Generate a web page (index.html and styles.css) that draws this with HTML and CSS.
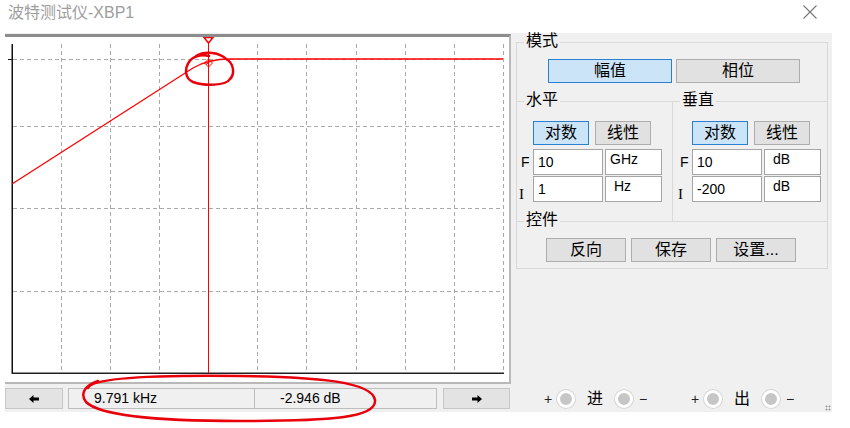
FILE: index.html
```html
<!DOCTYPE html>
<html lang="zh-CN">
<head>
  <meta charset="UTF-8" />
  <meta name="viewport" content="width=device-width, initial-scale=1.0"/>
  <title>波特测试仪-XBP1</title>
  <link rel="stylesheet" href="styles.css">
</head>
<body>
  <div class="titlebar">
    <span class="title">波特测试仪-XBP1</span>
    <svg class="close" width="16" height="14" viewBox="0 0 16 14">
      <path d="M1.5 0.5 L14.5 13.5 M14.5 0.5 L1.5 13.5" stroke="#777" stroke-width="1.1" fill="none"/>
    </svg>
  </div>

  <div class="window">
    <div class="scope">
      <div class="plot">
        <svg width="504" height="345" viewBox="0 0 504 345">
          <!-- grid -->
          <g stroke="#aaa" stroke-width="1" stroke-dasharray="4 3" fill="none">
            <path d="M56.5 7 V336 M105.5 7 V336 M154.5 7 V336 M252.5 7 V336 M301.5 7 V336 M351.5 7 V336 M400.5 7 V336 M449.5 7 V336 M498.5 7 V336"/>
            <path d="M8 89.5 H498 M8 171.5 H498 M8 254.5 H498 M8 22.5 H498"/>
          </g>
          <!-- axes -->
          <path d="M7.25 7 V337" stroke="#111" stroke-width="1.5"/>
          <path d="M7 336.25 H499" stroke="#222" stroke-width="1.5"/>
          <path d="M3 22.5 H7" stroke="#111" stroke-width="1"/>
          <!-- curve -->
          <path d="M7 147 L188 31 Q203 22 225 22 L498 22" stroke="#f00" stroke-width="1.3" fill="none"/>
          <!-- cursor -->
          <path d="M203.5 0 V336" stroke="#f00" stroke-width="1"/>
          <path d="M199 0.5 H208 L203.5 6 Z" stroke="#f00" stroke-width="1.5" fill="#fff"/>
          <path d="M199.5 26 L203.5 22 L207.5 26 L203.5 30 Z M201 27.5 L206 24" stroke="#f00" stroke-width="1" fill="none"/>
        </svg>
      </div>
      <div class="readout">
        <button class="step">
          <svg width="10" height="8" viewBox="0 0 10 8"><path d="M0 4 L4.5 0 V2.6 H10 V5.4 H4.5 V8 Z" fill="#000"/></svg>
        </button>
        <div class="value freq">9.791 kHz</div>
        <div class="value gain">-2.946 dB</div>
        <button class="step next">
          <svg width="10" height="8" viewBox="0 0 10 8"><path d="M10 4 L5.5 0 V2.6 H0 V5.4 H5.5 V8 Z" fill="#000"/></svg>
        </button>
      </div>
    </div>

    <div class="controls">
      <fieldset class="panel">
        <legend>模式</legend>
        <div class="mode-row">
          <button class="btn wide on">幅值</button>
          <button class="btn wide">相位</button>
        </div>

        <div class="axes">
          <fieldset class="axis">
            <legend>水平</legend>
            <div class="pair">
              <button class="btn on">对数</button>
              <button class="btn">线性</button>
            </div>
            <div class="entry"><span class="lbl">F</span><span class="box">10</span><span class="box unit">GHz</span></div>
            <div class="entry"><span class="lbl i">I</span><span class="box">1</span><span class="box unit">&nbsp;Hz</span></div>
          </fieldset>
          <fieldset class="axis vert">
            <legend>垂直</legend>
            <div class="pair">
              <button class="btn on">对数</button>
              <button class="btn">线性</button>
            </div>
            <div class="entry"><span class="lbl">F</span><span class="box">10</span><span class="box unit">&nbsp;dB</span></div>
            <div class="entry"><span class="lbl i">I</span><span class="box">-200</span><span class="box unit">&nbsp;dB</span></div>
          </fieldset>
        </div>

        <fieldset class="ctrl">
          <legend>控件</legend>
          <div class="ctrl-row">
            <button class="btn mid">反向</button>
            <button class="btn mid">保存</button>
            <button class="btn mid">设置...</button>
          </div>
        </fieldset>
      </fieldset>

      <div class="terminals">
        <div class="term">
          <span class="sign">+</span><span class="dot"></span><span class="name">进</span><span class="dot"></span><span class="sign minus">−</span>
        </div>
        <div class="term out">
          <span class="sign">+</span><span class="dot"></span><span class="name">出</span><span class="dot"></span><span class="sign minus">−</span>
        </div>
      </div>
    </div>
    <span class="grip"></span>
  </div>

  <!-- hand-drawn marks on the screenshot -->
  <svg class="ink" width="850" height="428" viewBox="0 0 850 428">
    <g stroke="#e8000b" stroke-width="2.5" fill="none" stroke-linecap="round">
      <path d="M196 56 C206 50 220 53 226 59 C234 63 235 74 230 79 C226 86 204 86 193 82 C184 78 185 68 189 62 C192 57 200 54 209 56"/>
      <path d="M88 388 C92 378 150 375 240 376 C320 377 372 382 375 400 C377 418 330 421 240 421 C160 421 100 416 86 402 C80 394 84 386 98 381"/>
    </g>
  </svg>
</body>
</html>
```

FILE: styles.css
```css
body {
  margin: 0; background: #fff; color: #000;
  font-family: "Liberation Sans", "Noto Sans CJK SC", sans-serif;
  position: relative; width: 850px; height: 428px; overflow: hidden;
}

.titlebar {
  height: 33px; box-sizing: border-box; padding: 3px 32px 0 8px;
  display: flex; justify-content: space-between; align-items: flex-start;
}
.title { font-size: 16px; line-height: 20px; color: #9d9d9d; }
.close { margin-top: 2px; }

.window {
  position: relative; display: flex;
  margin-left: 5px; width: 827px; height: 379px; background: #f0f0f0;
}

/* plot + readout */
.scope { width: 506px; display: flex; flex-direction: column; }
.plot {
  margin-top: 1px; height: 350px; box-sizing: border-box; background: #fff;
  border-top: 3px solid #8c8c8c; border-right: 2px solid #b8b8b8; border-bottom: 2px solid #b8b8b8;
}
.plot svg { display: block; }

.readout { margin-top: 4px; height: 21px; display: flex; }
.step {
  width: 58px; height: 21px; padding: 0; border: 1px solid #c6c6c6; background: #e3e3e3;
  display: flex; align-items: center; justify-content: center;
}
.step.next { width: 67px; margin-left: 6px; }
.value {
  height: 21px; box-sizing: border-box; border: 1px solid #bdbdbd;
  padding-left: 25px; font-size: 14px; line-height: 19px;
}
.value.freq { width: 187px; margin-left: 5px; }
.value.gain { width: 182px; border-left: none; }

/* right side */
.controls { flex: 1; display: flex; flex-direction: column; padding-left: 5px; }

fieldset { margin: 0; padding: 0; border: none; min-width: 0; }
legend { font-size: 16px; line-height: 20px; padding: 0 2px 3px; margin-left: 7px; }

.panel {
  width: 312px; box-sizing: border-box; margin-top: -2px; padding-bottom: 6px;
  border: 1px solid #d9d9d9;
}

.btn {
  height: 24px; box-sizing: border-box; padding: 0;
  border: 1px solid #adadad; background: #e1e1e1; color: #000;
  font-family: "Liberation Sans", "Noto Sans CJK SC", sans-serif; font-size: 16px; line-height: 22px;
}
.btn.on { background: #cce4f7; border-color: #2a7fd0; }
.btn.wide { width: 124px; }
.btn.mid { width: 80px; }

.mode-row { display: flex; gap: 4px; margin-top: 5px; padding-left: 31px; }

.axes { display: flex; margin-top: 7px; }
.axis {
  width: 156px; box-sizing: border-box; padding: 0 0 19px 4px;
  border-top: 1px solid #d9d9d9; border-right: 1px solid #d9d9d9;
}
.axis legend { margin-left: 3px; }
.axis.vert { flex: 1; padding-left: 7px; border-right: none; }
.axis.vert legend { margin-left: 0; }
.pair { display: flex; gap: 6px; margin: 8px 0 4px 12px; }
.pair .btn { width: 56px; }

.entry { display: flex; height: 26px; }
.entry + .entry { margin-top: 1px; }
.lbl { width: 12px; font-size: 14px; line-height: 26px; }
.lbl.i { font-family: "Liberation Serif", serif; font-size: 15px; padding-top: 5px; margin-left: -2px; width: 14px; }
.box {
  width: 70px; box-sizing: border-box; border: 1px solid #a5a5a5; background: #fff;
  padding-left: 4px; font-size: 14px; line-height: 24px;
}
.box.unit { width: 57px; margin-left: 2px; line-height: 19px; }

.ctrl { margin-top: -11px; border-top: 1px solid #d9d9d9; }
.ctrl-row { display: flex; gap: 5px; margin-top: 5px; padding-left: 29px; }

.terminals {
  margin-top: auto; margin-bottom: 3px; height: 21px;
  display: flex; align-items: center; padding-left: 28px;
}
.term { display: flex; align-items: center; }
.term.out { margin-left: 44px; }
.sign { width: 8px; text-align: center; font-size: 14px; color: #222; }
.sign.minus { margin-left: 6px; }
.dot {
  width: 18px; height: 18px; box-sizing: border-box; border-radius: 50%;
  background: #c6c6c6; border: 3px solid #fff; box-shadow: 0 0 0 1px #d6d6d6;
  margin-left: 5px;
}
.name { font-size: 16px; line-height: 20px; margin: 0 12px; }
.name + .dot { margin-left: 0; }

.grip {
  position: absolute; right: 1px; bottom: 1px; width: 6px; height: 6px;
  background: radial-gradient(circle, #9a9a9a 0.8px, transparent 1.2px) 0 0 / 3px 3px;
}

.ink { position: absolute; left: 0; top: 0; pointer-events: none; }
```
